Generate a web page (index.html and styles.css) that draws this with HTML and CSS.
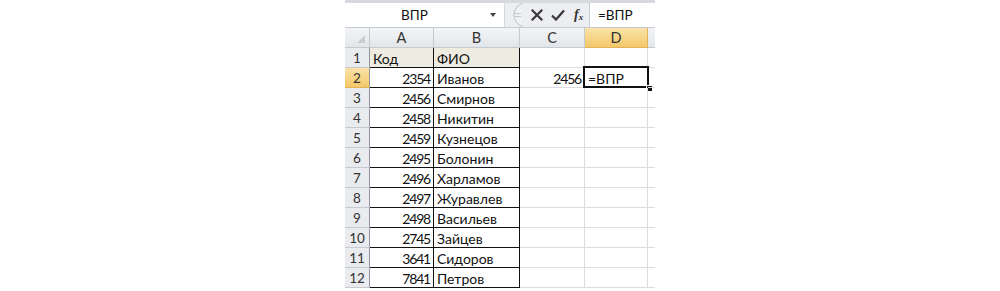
FILE: index.html
```html
<!DOCTYPE html>
<html lang="ru">
<head>
<meta charset="utf-8">
<link rel="stylesheet" href="styles.css">
</head>
<body>
<div class="excel">
  <div class="fbar">
    <div class="namebox"><span class="nb-text">ВПР</span><span class="nb-arrow"></span></div>
    <div class="tools">
      <svg class="grip" width="16" height="24" viewBox="0 0 16 24"><path d="M15.5 0.5 A12 12 0 0 0 15.5 23.5" fill="#eef0f3" stroke="#b9bec5"/><path d="M8 10.5h6M8 13.5h6" stroke="#c3c7cc" stroke-width="1"/></svg>
      <svg class="ic" width="12" height="12" viewBox="0 0 12 12"><path d="M1.5 1.5l9 9M10.5 1.5l-9 9" stroke="#3a3a3a" stroke-width="2.2" stroke-linecap="square"/></svg>
      <svg class="ic" width="14" height="12" viewBox="0 0 14 12"><path d="M1 6.5l4 4L13 1.5" fill="none" stroke="#3a3a3a" stroke-width="2.3"/></svg>
      <span class="fx">f<sub>x</sub></span>
    </div>
    <div class="formula">=ВПР</div>
  </div>
  <div class="sheet">
    <div class="h corner"><svg width="10" height="10" viewBox="0 0 10 10"><path d="M9 1V9H1z" fill="#c9ccd0"/></svg></div>
    <div class="h col">A</div><div class="h col">B</div><div class="h col">C</div><div class="h col sel">D</div><div class="h col strip"></div>

    <div class="h row">1</div><div class="c b tan">Код</div><div class="c b tan">ФИО</div><div class="c"></div><div class="c"></div><div class="c strip"></div>
    <div class="h row sel">2</div><div class="c b n">2354</div><div class="c b">Иванов</div><div class="c n">2456</div><div class="c active">=ВПР<span class="selbox"></span><span class="handle"></span></div><div class="c strip"></div>
    <div class="h row">3</div><div class="c b n">2456</div><div class="c b">Смирнов</div><div class="c"></div><div class="c"></div><div class="c strip"></div>
    <div class="h row">4</div><div class="c b n">2458</div><div class="c b">Никитин</div><div class="c"></div><div class="c"></div><div class="c strip"></div>
    <div class="h row">5</div><div class="c b n">2459</div><div class="c b">Кузнецов</div><div class="c"></div><div class="c"></div><div class="c strip"></div>
    <div class="h row">6</div><div class="c b n">2495</div><div class="c b">Болонин</div><div class="c"></div><div class="c"></div><div class="c strip"></div>
    <div class="h row">7</div><div class="c b n">2496</div><div class="c b">Харламов</div><div class="c"></div><div class="c"></div><div class="c strip"></div>
    <div class="h row">8</div><div class="c b n">2497</div><div class="c b">Журавлев</div><div class="c"></div><div class="c"></div><div class="c strip"></div>
    <div class="h row">9</div><div class="c b n">2498</div><div class="c b">Васильев</div><div class="c"></div><div class="c"></div><div class="c strip"></div>
    <div class="h row">10</div><div class="c b n">2745</div><div class="c b">Зайцев</div><div class="c"></div><div class="c"></div><div class="c strip"></div>
    <div class="h row">11</div><div class="c b n">3641</div><div class="c b">Сидоров</div><div class="c"></div><div class="c"></div><div class="c strip"></div>
    <div class="h row">12</div><div class="c b n">7841</div><div class="c b">Петров</div><div class="c"></div><div class="c"></div><div class="c strip"></div>
  </div>
</div>
</body>
</html>
```

FILE: styles.css
```css
html, body {
  margin: 0;
  padding: 0;
  background: #ffffff;
}
body {
  font-family: Lato, "Open Sans", sans-serif;
  color: #111;
}
.excel {
  width: 310px;
  margin-left: 345px;
}
.fbar {
  display: flex;
  height: 24px;
  border-top: 3px solid #d6dade;
  border-bottom: 1px solid #c6cbd1;
  background: #eceef1;
}
.namebox {
  width: 159px;
  background: #fff;
  border-right: 1px solid #d4d8dc;
  display: flex;
  align-items: center;
}
.nb-text {
  flex: 1;
  text-align: center;
  font-size: 13.5px;
  padding-right: 20px;
  padding-left: 14px;
}
.nb-arrow {
  width: 0;
  height: 0;
  border-left: 3.5px solid transparent;
  border-right: 3.5px solid transparent;
  border-top: 4px solid #444;
  margin-right: 8px;
}
.tools {
  display: flex;
  align-items: center;
  width: 84px;
}
.grip { margin-left: 2px; margin-right: 8px; }
.tools .ic { margin-right: 8px; }
.fx {
  font-family: "Liberation Serif", serif;
  font-style: italic;
  font-weight: bold;
  font-size: 14px;
  color: #333;
  margin-left: 1px;
}
.fx sub { font-size: 9px; vertical-align: -1px; }
.formula {
  flex: 1;
  background: #fff;
  border-left: 1px solid #c8ccd1;
  font-size: 13.5px;
  display: flex;
  align-items: center;
  padding-left: 8px;
}
.sheet {
  display: grid;
  grid-template-columns: 25px 64px 86px 65px 63px 7px;
  grid-auto-rows: 20px;
  font-size: 14px;
}
.h, .c {
  box-sizing: border-box;
  border-right: 1px solid #dadde1;
  border-bottom: 1px solid #dadde1;
  display: flex;
  align-items: center;
  padding: 1px 2px 0 3px;
  white-space: nowrap;
  position: relative;
}
.h {
  justify-content: center;
  color: #333;
  background: #e9ebee;
  border-color: #c5cad0;
  font-size: 13.5px;
  padding: 0;
}
.h.col {
  background: linear-gradient(#f3f4f6, #e3e6e9);
  font-size: 14.5px;
}
.h.row { border-right-color: #8f959c; }
.h.corner {
  background: linear-gradient(#f3f4f6, #e3e6e9);
  justify-content: flex-end;
  align-items: flex-end;
  padding: 0 3px 3px 0;
}
.h.sel, .h.col.sel {
  background: linear-gradient(#fae3a9, #f3c869);
  border-color: #e2b259;
}
.h.row.sel { border-right-color: #8f959c; }
.c.b { border-right-color: #111; border-bottom-color: #111; }
.c.tan { background: #eeece1; }
.c.n { justify-content: flex-end; letter-spacing: -1.2px; padding-right: 3px; }
.c.strip, .h.strip { border-right: none; }
.selbox {
  position: absolute;
  left: -2px;
  top: -2px;
  width: 66px;
  height: 22px;
  box-sizing: border-box;
  border: 2px solid #111;
}
.handle {
  position: absolute;
  left: 61px;
  top: 17px;
  width: 5px;
  height: 5px;
  background: #111;
  border: 1px solid #fff;
}
```
